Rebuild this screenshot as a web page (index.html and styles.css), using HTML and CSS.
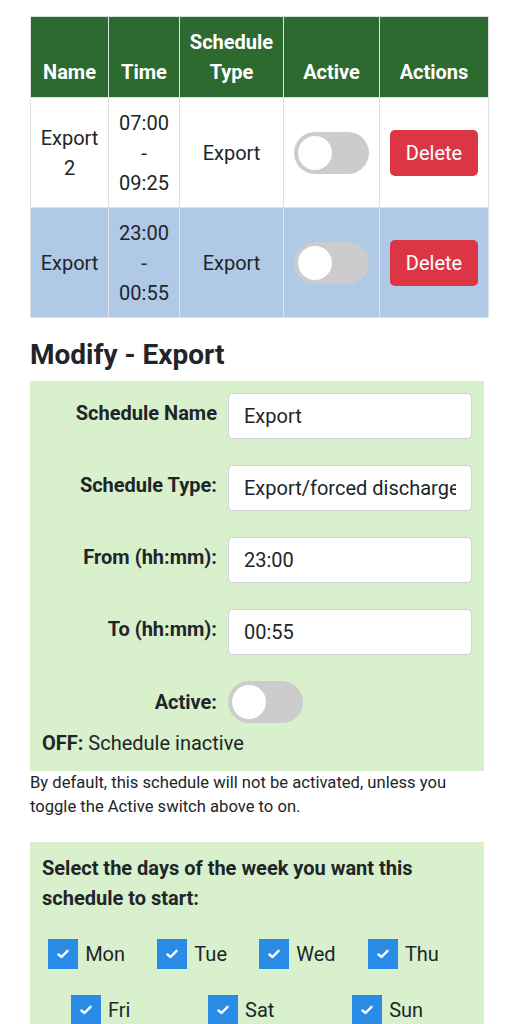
FILE: index.html
```html
<!DOCTYPE html>
<html lang="en">
<head>
  <meta charset="UTF-8">
  <meta name="viewport" content="width=device-width, initial-scale=1.0">
  <title>Schedules</title>
  <link rel="stylesheet" href="styles.css">
</head>
<body>
  <div class="page">

    <table class="schedules">
      <colgroup>
        <col class="col-name">
        <col class="col-time">
        <col class="col-type">
        <col class="col-active">
        <col class="col-actions">
      </colgroup>
      <thead>
        <tr>
          <th>Name</th>
          <th>Time</th>
          <th>Schedule Type</th>
          <th>Active</th>
          <th>Actions</th>
        </tr>
      </thead>
      <tbody>
        <tr>
          <td>Export 2</td>
          <td>07:00 - 09:25</td>
          <td>Export</td>
          <td><span class="switch"><span class="knob"></span></span></td>
          <td><button class="btn-delete">Delete</button></td>
        </tr>
        <tr class="selected">
          <td>Export</td>
          <td>23:00 - 00:55</td>
          <td>Export</td>
          <td><span class="switch"><span class="knob"></span></span></td>
          <td><button class="btn-delete">Delete</button></td>
        </tr>
      </tbody>
    </table>

    <h2 class="modify-title">Modify - Export</h2>

    <!-- schedule details -->
    <div class="panel form-panel">
      <div class="form-grid">
        <label class="form-label">Schedule Name</label>
        <input class="form-input" type="text" value="Export">

        <label class="form-label">Schedule Type:</label>
        <input class="form-input" type="text" value="Export/forced discharge">

        <label class="form-label">From (hh:mm):</label>
        <input class="form-input" type="text" value="23:00">

        <label class="form-label">To (hh:mm):</label>
        <input class="form-input" type="text" value="00:55">

        <label class="form-label label-center">Active:</label>
        <span class="switch"><span class="knob"></span></span>
      </div>
      <p class="status"><b>OFF:</b> Schedule inactive</p>
    </div>

    <p class="hint">By default, this schedule will not be activated, unless you toggle the Active switch above to on.</p>

    <!-- days of week -->
    <div class="panel days-panel">
      <p class="days-title">Select the days of the week you want this schedule to start:</p>
      <div class="days-row first-row">
        <label class="day"><span class="check"><svg viewBox="0 0 12 10" width="12" height="10"><polyline points="1.5,5.5 4.5,8 10.5,1.8" fill="none" stroke="#fff" stroke-width="2.4" stroke-linecap="round" stroke-linejoin="round"/></svg></span>Mon</label>
        <label class="day"><span class="check"><svg viewBox="0 0 12 10" width="12" height="10"><polyline points="1.5,5.5 4.5,8 10.5,1.8" fill="none" stroke="#fff" stroke-width="2.4" stroke-linecap="round" stroke-linejoin="round"/></svg></span>Tue</label>
        <label class="day"><span class="check"><svg viewBox="0 0 12 10" width="12" height="10"><polyline points="1.5,5.5 4.5,8 10.5,1.8" fill="none" stroke="#fff" stroke-width="2.4" stroke-linecap="round" stroke-linejoin="round"/></svg></span>Wed</label>
        <label class="day"><span class="check"><svg viewBox="0 0 12 10" width="12" height="10"><polyline points="1.5,5.5 4.5,8 10.5,1.8" fill="none" stroke="#fff" stroke-width="2.4" stroke-linecap="round" stroke-linejoin="round"/></svg></span>Thu</label>
      </div>
      <div class="days-row">
        <label class="day"><span class="check"><svg viewBox="0 0 12 10" width="12" height="10"><polyline points="1.5,5.5 4.5,8 10.5,1.8" fill="none" stroke="#fff" stroke-width="2.4" stroke-linecap="round" stroke-linejoin="round"/></svg></span>Fri</label>
        <label class="day"><span class="check"><svg viewBox="0 0 12 10" width="12" height="10"><polyline points="1.5,5.5 4.5,8 10.5,1.8" fill="none" stroke="#fff" stroke-width="2.4" stroke-linecap="round" stroke-linejoin="round"/></svg></span>Sat</label>
        <label class="day"><span class="check"><svg viewBox="0 0 12 10" width="12" height="10"><polyline points="1.5,5.5 4.5,8 10.5,1.8" fill="none" stroke="#fff" stroke-width="2.4" stroke-linecap="round" stroke-linejoin="round"/></svg></span>Sun</label>
      </div>
    </div>

  </div>
</body>
</html>
```

FILE: styles.css
```css
    body {
      margin: 0;
      font-family: Roboto, "Liberation Sans", sans-serif;
      color: #212529;
      background-color: #fff;
      font-size: 20px;
      line-height: 30px;
    }

    .page {
      padding: 16px 0 40px 30px;
    }

    /* schedule table */
    .schedules {
      width: 458px;
      table-layout: fixed;
      border-collapse: collapse;
    }

    .col-name { width: 78px; }
    .col-time { width: 71px; }
    .col-type { width: 104px; }
    .col-active { width: 96px; }
    .col-actions { width: 109px; }

    .schedules th, .schedules td {
      border: 1px solid #dee2e6;
      padding: 10px 8px;
      text-align: center;
    }

    .schedules th {
      background-color: #2d6a2f;
      color: #fff;
      font-weight: 700;
      vertical-align: bottom;
    }

    .schedules td {
      vertical-align: middle;
      padding-bottom: 9px;
    }

    .schedules tr.selected td {
      background-color: #afc9e7;
    }

    .switch {
      display: inline-block;
      vertical-align: middle;
      width: 75px;
      height: 42px;
      border-radius: 21px;
      background-color: #cccccc;
      box-sizing: border-box;
      padding: 4px;
    }

    .knob {
      display: block;
      width: 34px;
      height: 34px;
      border-radius: 50%;
      background-color: #fff;
    }

    .btn-delete {
      font-family: inherit;
      font-size: 20px;
      line-height: 30px;
      color: #fff;
      background-color: #dc3545;
      border: none;
      border-radius: 5px;
      padding: 8px 16px;
      vertical-align: middle;
    }

    .modify-title {
      font-size: 28px;
      font-weight: 700;
      line-height: 34px;
      margin: 20px 0 9px;
    }

    /* green panels */
    .panel {
      width: 454px;
      box-sizing: border-box;
      background-color: #d8f0cb;
      padding: 12px 12px 13px;
    }

    .form-grid {
      display: grid;
      grid-template-columns: 175px 1fr;
      column-gap: 11px;
      row-gap: 26px;
      align-items: start;
    }

    .form-label {
      font-weight: 700;
      text-align: right;
      padding-top: 5px;
    }

    .form-label.label-center {
      align-self: center;
      padding-top: 0;
    }

    .form-input {
      font-family: inherit;
      font-size: 20px;
      line-height: 30px;
      color: #212529;
      background-color: #fff;
      border: 1px solid #ced4da;
      border-radius: 5px;
      padding: 7px 15px;
      width: 100%;
      box-sizing: border-box;
      min-width: 0;
    }

    .status {
      margin: 5px 0 0;
    }

    .hint {
      width: 454px;
      font-size: 16.6px;
      line-height: 24px;
      margin: 0 0 23px;
    }

    .days-panel {
      padding-top: 11px;
    }

    .days-title {
      font-weight: 700;
      margin: 0 0 26px;
    }

    .days-row {
      display: flex;
      justify-content: space-around;
      margin-bottom: 26px;
    }

    .days-row.first-row {
      padding-right: 7px;
    }

    .day {
      display: flex;
      align-items: center;
      gap: 7px;
      margin-right: 20px;
    }

    .check {
      width: 30px;
      height: 30px;
      background-color: #2b8ce8;
      display: flex;
      align-items: center;
      justify-content: center;
    }
```
